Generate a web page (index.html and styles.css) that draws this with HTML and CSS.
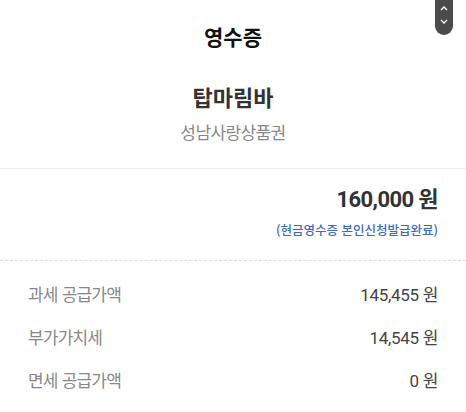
FILE: index.html
```html
<!DOCTYPE html>
<html lang="ko">
<head>
<meta charset="utf-8">
<link rel="stylesheet" href="styles.css">
</head>
<body>
<div class="page">
  <header class="title">영수증</header>
  <section class="store">
    <div class="store-name">탑마림바</div>
    <div class="store-sub">성남사랑상품권</div>
  </section>
  <section class="total">
    <div class="total-amount">160,000 원</div>
    <div class="total-note">(현금영수증 본인신청발급완료)</div>
  </section>
  <section class="rows">
    <div class="row"><span class="label">과세 공급가액</span><span class="value">145,455 원</span></div>
    <div class="row"><span class="label">부가가치세</span><span class="value">14,545 원</span></div>
    <div class="row"><span class="label">면세 공급가액</span><span class="value">0 원</span></div>
  </section>
  <div class="scroller">
    <svg width="10" height="26" viewBox="0 0 10 26"><path d="M2 8 L5 5 L8 8" fill="none" stroke="#fff" stroke-width="1.3"/><path d="M2 18 L5 21 L8 18" fill="none" stroke="#fff" stroke-width="1.3"/></svg>
  </div>
</div>
</body>
</html>
```
FILE: styles.css
```css
* { box-sizing: border-box; }
body {
  margin: 0;
  background: #fff;
  font-family: "Noto Sans CJK KR", "Noto Sans", sans-serif;
}
.page {
  position: relative;
  width: 466px;
  height: 412px;
  overflow: hidden;
}
.title {
  height: 76px;
  display: flex;
  align-items: center;
  justify-content: center;
  font-size: 21px;
  font-weight: 700;
  color: #111;
  padding-bottom: 4px;
}
.store {
  display: flex;
  flex-direction: column;
  align-items: center;
  height: 93px;
  border-bottom: 1px solid #eef0f0;
}
.store-name {
  font-size: 22px;
  font-weight: 700;
  color: #333;
  line-height: 32px;
  margin-top: 4px;
}
.store-sub {
  font-size: 17px;
  letter-spacing: -0.6px;
  color: #888;
  line-height: 24px;
  margin-top: 8px;
}
.total {
  display: flex;
  flex-direction: column;
  align-items: flex-end;
  padding: 15px 28px 0 0;
  height: 92px;
  border-bottom: 1px dashed #dedede;
}
.total-amount {
  font-family: Roboto, "Noto Sans CJK KR", sans-serif;
  font-size: 22px;
  font-weight: 700;
  color: #333;
  line-height: 32px;
  letter-spacing: -0.6px;
}
.value { letter-spacing: -0.3px; }
.total-note {
  font-size: 12.5px;
  font-weight: 500;
  color: #3a6cc4;
  line-height: 20px;
  margin-top: 4px;
}
.rows {
  padding: 18px 28px 0 28px;
  display: flex;
  flex-direction: column;
  gap: 15px;
}
.row {
  display: flex;
  justify-content: space-between;
  align-items: center;
  height: 28px;
}
.label {
  font-size: 17px;
  letter-spacing: -0.8px;
  color: #888;
}
.value {
  font-family: Roboto, "Noto Sans CJK KR", sans-serif;
  font-size: 17px;
  color: #444;
}
.scroller {
  position: absolute;
  top: -6px;
  left: 435px;
  width: 18px;
  height: 41px;
  border-radius: 0 0 9px 9px;
  background: #4b4b4b;
  display: flex;
  justify-content: center;
  align-items: flex-end;
  padding-bottom: 7px;
}
```
